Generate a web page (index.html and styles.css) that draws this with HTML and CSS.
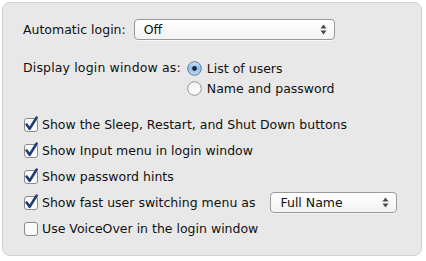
FILE: index.html
```html
<!DOCTYPE html>
<html>
<head>
<meta charset="utf-8">
<link rel="stylesheet" href="styles.css">
</head>
<body>
<div class="panel">
  <div class="row login-row">
    <span class="label">Automatic login:</span>
    <div class="select select-login">
      <span class="select-text">Off</span>
      <svg class="arrows" width="7" height="11" viewBox="0 0 7 11"><path d="M3.5 0.5 L6.5 4.5 L0.5 4.5 Z" fill="#4a4a4a"/><path d="M3.5 10.5 L6.5 6.5 L0.5 6.5 Z" fill="#4a4a4a"/></svg>
    </div>
  </div>

  <div class="display-group">
    <span class="label display-label">Display login window as:</span>
    <div class="radios">
      <div class="radio-row">
        <svg class="radio" width="15" height="15" viewBox="0 0 15 15">
          <defs>
            <linearGradient id="rb" x1="0" y1="0" x2="0" y2="1">
              <stop offset="0" stop-color="#cfe3f7"/>
              <stop offset="0.5" stop-color="#93bde8"/>
              <stop offset="1" stop-color="#c4dcf5"/>
            </linearGradient>
          </defs>
          <circle cx="7.5" cy="7.5" r="6.8" fill="url(#rb)" stroke="#4f6f99" stroke-width="0.9"/>
          <circle cx="7.5" cy="7.5" r="2.4" fill="#1b2635"/>
        </svg>
        <span>List of users</span>
      </div>
      <div class="radio-row">
        <svg class="radio" width="15" height="15" viewBox="0 0 15 15">
          <defs>
            <linearGradient id="rw" x1="0" y1="0" x2="0" y2="1">
              <stop offset="0" stop-color="#f2f2f2"/>
              <stop offset="1" stop-color="#ffffff"/>
            </linearGradient>
          </defs>
          <circle cx="7.5" cy="7.5" r="6.8" fill="url(#rw)" stroke="#8a8a8a" stroke-width="0.9"/>
        </svg>
        <span>Name and password</span>
      </div>
    </div>
  </div>

  <div class="checks">
    <div class="check-row">
      <svg class="cb" width="16" height="16" viewBox="0 0 16 16"><rect x="1.5" y="2.5" width="13" height="13" rx="2.5" fill="#fafafa" stroke="#8a8a8a"/><path d="M3.6 8.6 L6.6 12.8 L13.6 1.6" fill="none" stroke="#1f3c73" stroke-width="2.6" stroke-linecap="round" stroke-linejoin="round"/></svg>
      <span>Show the Sleep, Restart, and Shut Down buttons</span>
    </div>
    <div class="check-row">
      <svg class="cb" width="16" height="16" viewBox="0 0 16 16"><rect x="1.5" y="2.5" width="13" height="13" rx="2.5" fill="#fafafa" stroke="#8a8a8a"/><path d="M3.6 8.6 L6.6 12.8 L13.6 1.6" fill="none" stroke="#1f3c73" stroke-width="2.6" stroke-linecap="round" stroke-linejoin="round"/></svg>
      <span>Show Input menu in login window</span>
    </div>
    <div class="check-row">
      <svg class="cb" width="16" height="16" viewBox="0 0 16 16"><rect x="1.5" y="2.5" width="13" height="13" rx="2.5" fill="#fafafa" stroke="#8a8a8a"/><path d="M3.6 8.6 L6.6 12.8 L13.6 1.6" fill="none" stroke="#1f3c73" stroke-width="2.6" stroke-linecap="round" stroke-linejoin="round"/></svg>
      <span>Show password hints</span>
    </div>
    <div class="check-row">
      <svg class="cb" width="16" height="16" viewBox="0 0 16 16"><rect x="1.5" y="2.5" width="13" height="13" rx="2.5" fill="#fafafa" stroke="#8a8a8a"/><path d="M3.6 8.6 L6.6 12.8 L13.6 1.6" fill="none" stroke="#1f3c73" stroke-width="2.6" stroke-linecap="round" stroke-linejoin="round"/></svg>
      <span>Show fast user switching menu as</span>
      <div class="select select-name">
        <span class="select-text">Full Name</span>
        <svg class="arrows" width="7" height="11" viewBox="0 0 7 11"><path d="M3.5 0.5 L6.5 4.5 L0.5 4.5 Z" fill="#4a4a4a"/><path d="M3.5 10.5 L6.5 6.5 L0.5 6.5 Z" fill="#4a4a4a"/></svg>
      </div>
    </div>
    <div class="check-row">
      <svg class="cb" width="16" height="16" viewBox="0 0 16 16"><rect x="1.5" y="2.5" width="13" height="13" rx="2.5" fill="#fafafa" stroke="#8a8a8a"/></svg>
      <span>Use VoiceOver in the login window</span>
    </div>
  </div>
</div>
</body>
</html>
```

FILE: styles.css
```css
html, body {
  margin: 0;
  padding: 0;
  background: #ffffff;
}
body {
  font-family: "DejaVu Sans", "Liberation Sans", sans-serif;
  font-size: 12.5px;
  color: #111111;
}
.panel {
  box-sizing: border-box;
  margin: 2px 0 0 2px;
  width: 420px;
  height: 254px;
  background: #e8e8e8;
  border: 1px solid #d2d2d2;
  border-radius: 8px;
  padding: 16px 0 0 20px;
  display: flex;
  flex-direction: column;
}
.row {
  display: flex;
  align-items: center;
}
.login-row {
  height: 21px;
}
.label {
  white-space: nowrap;
}
.select {
  box-sizing: border-box;
  display: flex;
  align-items: center;
  justify-content: space-between;
  height: 21px;
  background: linear-gradient(#ffffff, #f3f3f3);
  border: 1px solid #9a9a9a;
  border-radius: 4px;
  padding: 0 7px 0 9px;
  box-shadow: 0 1px 0 rgba(255,255,255,0.6);
}
.select-login {
  width: 201px;
  margin-left: 8px;
}
.select-name {
  width: 127px;
  height: 21px;
  margin-left: 12px;
}
.arrows {
  display: block;
}
.display-group {
  display: flex;
  margin-top: 18px;
}
.display-label {
  line-height: 20px;
  letter-spacing: 0.15px;
}
.radios {
  display: flex;
  flex-direction: column;
  margin-left: 6px;
}
.radio-row {
  display: flex;
  align-items: center;
  height: 20px;
  gap: 5px;
}
.radio {
  display: block;
}
.checks {
  display: flex;
  flex-direction: column;
  margin-top: 13px;
}
.check-row {
  display: flex;
  align-items: center;
  height: 26px;
  gap: 3px;
}
.cb {
  display: block;
}
```
